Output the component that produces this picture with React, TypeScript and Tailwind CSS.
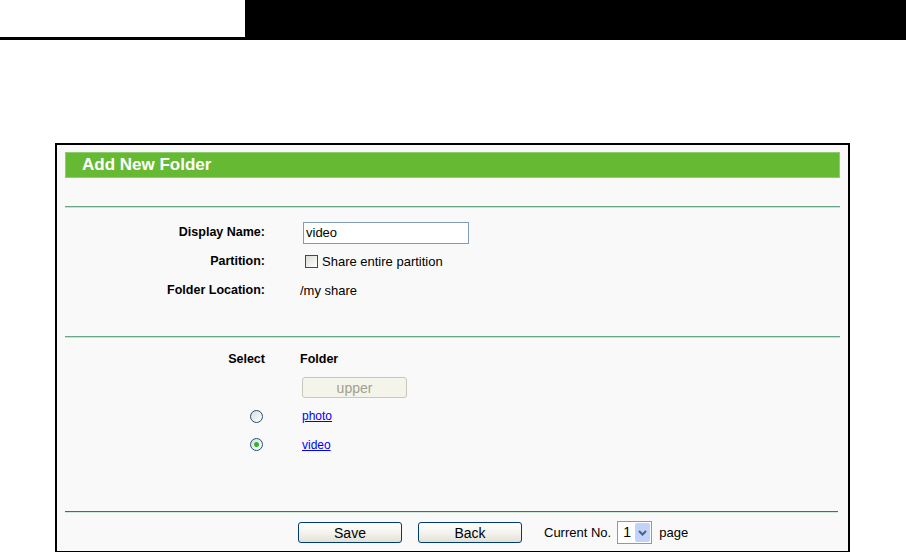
import React from 'react'

const font = { fontFamily: '"Liberation Sans", Arial, sans-serif' }

function Label({ children }: { children: React.ReactNode }) {
  return <div className="w-[200px] shrink-0 text-right text-[12.5px] font-bold text-black">{children}</div>
}

function Radio({ checked }: { checked?: boolean }) {
  return (
    <span className="inline-flex h-[13px] w-[13px] items-center justify-center rounded-full border border-[#1c5180] bg-gradient-to-br from-[#dcdcd6] to-white">
      {checked && <span className="h-[5px] w-[5px] rounded-full bg-[#2fb52f]" />}
    </span>
  )
}

function XpButton({ children, disabled }: { children: React.ReactNode; disabled?: boolean }) {
  return (
    <button
      className={
        disabled
          ? 'h-[21px] w-[105px] rounded-[3px] border border-[#c9c7ba] bg-[#f5f4ea] text-[14px] leading-none text-[#a19f92]'
          : 'h-[21px] w-[104px] rounded-[3px] border border-[#003c74] bg-gradient-to-b from-white via-[#f4f3ee] to-[#e3e1d6] text-[14px] leading-none text-black'
      }
      style={font}
    >
      {children}
    </button>
  )
}

export default function App() {
  return (
    <div className="min-h-[552px] w-[906px] bg-white" style={font}>
      {/* top strip */}
      <div className="flex h-[40px]">
        <div className="h-[40px] w-[245px] border-b-[3px] border-black" />
        <div className="flex-1 bg-black" />
      </div>

      <div className="ml-[55px] mt-[103px] w-[795px] border-2 border-black bg-[#f9f9f9] px-[8px] pb-[8px] pt-[7px]">
        {/* title bar */}
        <div className="flex h-[26px] items-center border border-[#8fcd6c] bg-[#66b933] pl-[16px] text-[17px] font-bold text-white">
          Add New Folder
        </div>

        <div className="mt-[28px] h-[2px] border-b border-[#c6e0d2] bg-[#6aa78a]" />

        <div className="pt-[10px]">
          <div className="flex h-[29px] items-center">
            <Label>Display Name:</Label>
            <div className="ml-[38px] flex h-[22px] w-[166px] items-center border border-[#7f9db9] bg-white pl-[2px] text-[13px] text-black">
              video
            </div>
          </div>
          <div className="flex h-[29px] items-center">
            <Label>Partition:</Label>
            <span className="ml-[40px] h-[13px] w-[13px] border border-[#1c5180] bg-gradient-to-br from-[#dcdcd6] to-white" />
            <span className="ml-[4px] text-[13px] text-black">Share entire partition</span>
          </div>
          <div className="flex h-[29px] items-center">
            <Label>Folder Location:</Label>
            <span className="ml-[35px] text-[13px] text-black">/my share</span>
          </div>
        </div>

        <div className="mt-[31px] h-[2px] border-b border-[#c6e0d2] bg-[#6aa78a]" />

        <div className="pt-[7px]">
          <div className="flex h-[28px] items-center">
            <Label>Select</Label>
            <span className="ml-[35px] text-[12.5px] font-bold text-black">Folder</span>
          </div>
          <div className="mt-[4px] flex h-[21px] items-center">
            <div className="w-[200px] shrink-0" />
            <div className="ml-[37px]">
              <XpButton disabled>upper</XpButton>
            </div>
          </div>
          <div className="mt-[4px] flex h-[28px] items-center">
            <div className="flex w-[200px] shrink-0 justify-end pr-[2px]">
              <Radio />
            </div>
            <a href="#" className="ml-[37px] text-[12px] text-[#0000ff] underline">photo</a>
          </div>
          <div className="flex h-[29px] items-center">
            <div className="flex w-[200px] shrink-0 justify-end pr-[2px]">
              <Radio checked />
            </div>
            <a href="#" className="ml-[37px] text-[12px] text-[#0000ff] underline">video</a>
          </div>
        </div>

        <div className="mt-[52px] mr-[2px] h-[2px] border-b border-[#d5e8dc] bg-[#2f7f52]" />

        <div className="mt-[9px] flex h-[21px] items-center pl-[233px]">
          <XpButton>Save</XpButton>
          <div className="ml-[16px]">
            <XpButton>Back</XpButton>
          </div>
          <span className="ml-[22px] text-[13px] text-black">Current No.</span>
          <div className="ml-[6px] flex h-[23px] w-[35px] items-center border border-[#7f9db9] bg-white">
            <span className="flex-1 pl-[5px] text-[14px] text-black">1</span>
            <span className="mr-[1px] flex h-[19px] w-[15px] items-center justify-center rounded-[2px] bg-[#c1d3fb]">
              <svg width="9" height="6" viewBox="0 0 9 6">
                <path d="M1 1 L4.5 4.5 L8 1" fill="none" stroke="#4d6185" strokeWidth="2" />
              </svg>
            </span>
          </div>
          <span className="ml-[7px] text-[13px] text-black">page</span>
        </div>
      </div>
    </div>
  )
}
